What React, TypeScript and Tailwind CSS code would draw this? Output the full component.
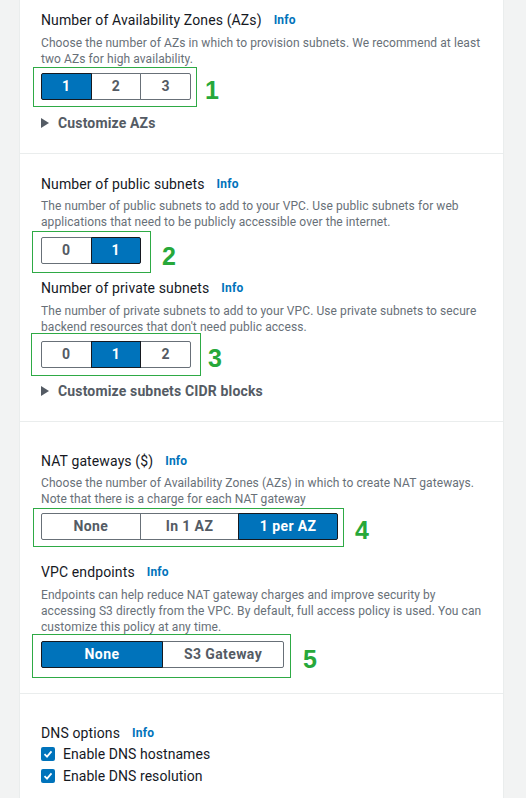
import type { ReactNode } from 'react';

const FONT = "font-['Roboto','Liberation_Sans',sans-serif]";

type Seg = { label: string; on?: boolean };

function Segments({ items, width }: { items: Seg[]; width: string }) {
  return (
    <div className={`flex h-[27px] ${width}`}>
      {items.map((s, i) => (
        <div
          key={s.label}
          className={`relative flex flex-1 items-center justify-center border text-[14px] font-bold tracking-[0.4px] ${
            i > 0 ? '-ml-px' : ''
          } ${i === 0 ? 'rounded-l-[2px]' : ''} ${i === items.length - 1 ? 'rounded-r-[2px]' : ''} ${
            s.on ? 'z-10 border-[#16191f] bg-[#0073bb] text-white' : 'border-[#687078] bg-white text-[#545b64]'
          }`}
        >
          {s.label}
        </div>
      ))}
    </div>
  );
}

// green annotation box + number drawn over the control
function Marked({ n, box, digit, children }: { n: string; box: string; digit: string; children: ReactNode }) {
  return (
    <div className="relative w-fit">
      {children}
      <div className={`pointer-events-none absolute border border-[#2eaa45] ${box}`} />
      <div className={`absolute font-['Liberation_Sans',sans-serif] text-[25px] font-bold leading-none text-[#27a83a] ${digit}`}>
        {n}
      </div>
    </div>
  );
}

function Title({ children, className = '' }: { children: ReactNode; className?: string }) {
  return (
    <div className={`flex items-center text-[14px] leading-[20px] tracking-[0.12px] text-[#16191f] ${className}`}>
      <span>{children}</span>
      <span className="ml-[12px] text-[12px] font-bold tracking-[0.2px] text-[#0073bb]">Info</span>
    </div>
  );
}

function Desc({ children, className = '' }: { children: ReactNode; className?: string }) {
  return (
    <p className={`whitespace-nowrap text-[12px] leading-[16px] tracking-[0.08px] text-[#687078] ${className}`}>
      {children}
    </p>
  );
}

function Expander({ label, className = '' }: { label: string; className?: string }) {
  return (
    <div className={`flex h-[20px] items-center gap-[9px] text-[14px] font-bold tracking-[0.15px] text-[#545b64] ${className}`}>
      <svg width="8" height="10" viewBox="0 0 8 10">
        <path d="M0 0 L8 5 L0 10 Z" fill="#545b64" />
      </svg>
      <span>{label}</span>
    </div>
  );
}

function Check({ label }: { label: string }) {
  return (
    <div className="flex h-[22px] items-center gap-[8px] text-[14px] tracking-[0.05px] text-[#16191f]">
      <span className="flex h-[14px] w-[14px] items-center justify-center rounded-[2px] bg-[#0073bb]">
        <svg width="10" height="10" viewBox="0 0 10 10">
          <path d="M1.5 5.2 L4 7.6 L8.5 2.4" fill="none" stroke="white" strokeWidth="1.8" />
        </svg>
      </span>
      <span>{label}</span>
    </div>
  );
}

export default function App() {
  return (
    <div className={`min-h-screen bg-[#f2f3f3] pl-[19px] pr-[22px] ${FONT}`}>
      <div className="min-h-[798px] border-x border-[#eaeded] bg-white">
        <section className="border-b border-[#eaeded] pl-[21px] pt-[10px] pb-[20px]">
          <Title>Number of Availability Zones (AZs)</Title>
          <Desc className="mt-[5px]">
            Choose the number of AZs in which to provision subnets. We recommend at least
            <br />
            two AZs for high availability.
          </Desc>
          <div className="mt-[6px]">
            <Marked n="1" box="-left-[8px] -top-[6px] -right-[6px] -bottom-[7px]" digit="left-[164px] top-[5px]">
              <Segments width="w-[150px]" items={[{ label: '1', on: true }, { label: '2' }, { label: '3' }]} />
            </Marked>
          </div>
          <Expander label="Customize AZs" className="mt-[13px]" />
        </section>

        <section className="border-b border-[#eaeded] pl-[21px] pt-[20px] pb-[20px]">
          <Title>Number of public subnets</Title>
          <Desc className="mt-[4px]">
            The number of public subnets to add to your VPC. Use public subnets for web
            <br />
            applications that need to be publicly accessible over the internet.
          </Desc>
          <div className="mt-[7px]">
            <Marked n="2" box="-left-[9px] -top-[6px] -right-[10px] -bottom-[9px]" digit="left-[121px] top-[7px]">
              <Segments width="w-[100px]" items={[{ label: '0' }, { label: '1', on: true }]} />
            </Marked>
          </div>
          <Title className="mt-[14px]">Number of private subnets</Title>
          <Desc className="mt-[5px]">
            The number of private subnets to add to your VPC. Use private subnets to secure
            <br />
            backend resources that don't need public access.
          </Desc>
          <div className="mt-[6px]">
            <Marked n="3" box="-left-[10px] -top-[8px] -right-[10px] -bottom-[8px]" digit="left-[167px] top-[5px]">
              <Segments width="w-[150px]" items={[{ label: '0' }, { label: '1', on: true }, { label: '2' }]} />
            </Marked>
          </div>
          <Expander label="Customize subnets CIDR blocks" className="mt-[13px]" />
        </section>

        <section className="border-b border-[#eaeded] pl-[21px] pt-[29px] pb-[25px]">
          <Title>NAT gateways ($)</Title>
          <Desc className="mt-[4px]">
            Choose the number of Availability Zones (AZs) in which to create NAT gateways.
            <br />
            Note that there is a charge for each NAT gateway
          </Desc>
          <div className="mt-[6px]">
            <Marked n="4" box="-left-[8px] -top-[5px] -right-[6px] -bottom-[7px]" digit="left-[314px] top-[5px]">
              <Segments
                width="w-[297px]"
                items={[{ label: 'None' }, { label: 'In 1 AZ' }, { label: '1 per AZ', on: true }]}
              />
            </Marked>
          </div>
          <Title className="mt-[22px]">VPC endpoints</Title>
          <Desc className="mt-[5px]">
            Endpoints can help reduce NAT gateway charges and improve security by
            <br />
            accessing S3 directly from the VPC. By default, full access policy is used. You can
            <br />
            customize this policy at any time.
          </Desc>
          <div className="mt-[6px]">
            <Marked n="5" box="-left-[9px] -top-[7px] -right-[7px] -bottom-[10px]" digit="left-[262px] top-[6px]">
              <Segments width="w-[243px]" items={[{ label: 'None', on: true }, { label: 'S3 Gateway' }]} />
            </Marked>
          </div>
        </section>

        <section className="pl-[21px] pt-[29px]">
          <Title>DNS options</Title>
          <Check label="Enable DNS hostnames" />
          <Check label="Enable DNS resolution" />
        </section>
      </div>
    </div>
  );
}
